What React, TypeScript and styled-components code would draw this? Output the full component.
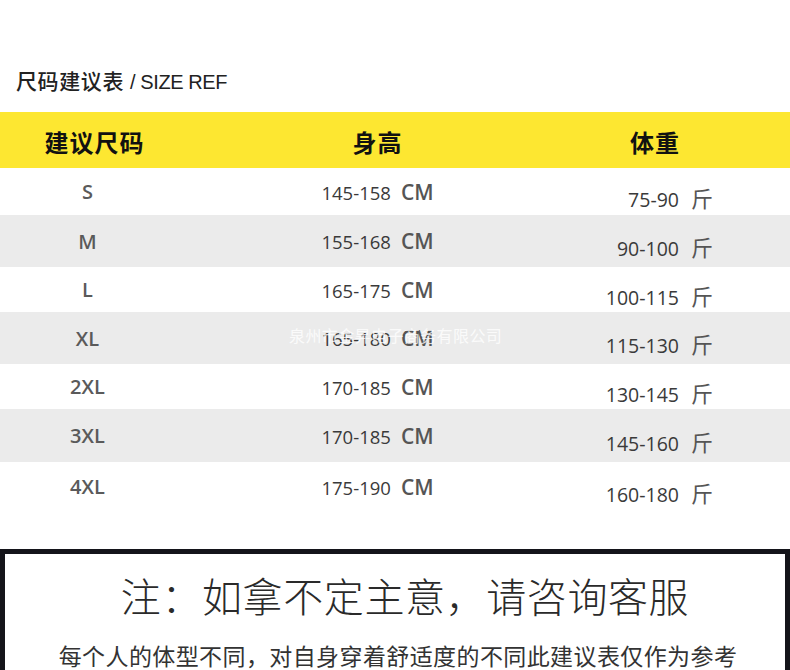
import React from "react";
import styled, { createGlobalStyle } from "styled-components";

const Global = createGlobalStyle`
  html, body { margin: 0; padding: 0; background: #fff; }
  body { width: 790px; overflow: hidden; font-family: "Noto Sans", "Noto Sans CJK SC", sans-serif; }
`;

const Page = styled.div`
  position: relative;
  width: 790px;
  height: 670px;
  overflow: hidden;
  display: flex;
  flex-direction: column;
`;

const Title = styled.div`
  height: 113px;
  padding: 65px 0 0 16px;
  box-sizing: border-box;
  display: flex;
  align-items: baseline;
  color: #222;
`;

const TitleCn = styled.span`
  font-family: "Noto Sans CJK SC", sans-serif;
  font-size: 21px;
  font-weight: 500;
  letter-spacing: 0.6px;
  line-height: 30px;
`;

const TitleEn = styled.span`
  font-family: "Liberation Sans", "Noto Sans", sans-serif;
  font-size: 20px;
  margin-left: 6px;
  letter-spacing: -0.4px;
`;

const Table = styled.div`
  display: flex;
  flex-direction: column;
`;

const Row = styled.div<{ $bg: string; $h: number }>`
  display: grid;
  grid-template-columns: 175px 405px 1fr;
  height: ${(p) => p.$h}px;
  background: ${(p) => p.$bg};
  align-items: center;
`;

const HeadCell = styled.div<{ $pr?: number; $pl?: number }>`
  text-align: center;
  font-family: "Noto Sans CJK SC", sans-serif;
  font-weight: 700;
  font-size: 24px;
  letter-spacing: 1px;
  color: #111;
  padding-right: ${(p) => p.$pr ?? 0}px;
  padding-left: ${(p) => p.$pl ?? 0}px;
  padding-top: 2px;
`;

const SizeCell = styled.div`
  text-align: center;
  font-family: "Open Sans", "Noto Sans", sans-serif;
  font-size: 20px;
  font-weight: 600;
  color: #5a5a5a;
`;

const HeightCell = styled.div`
  display: flex;
  justify-content: center;
  align-items: baseline;
  gap: 10px;
`;

const Num = styled.span<{ $size: number }>`
  font-family: "Open Sans", "Noto Sans", sans-serif;
  font-size: ${(p) => p.$size}px;
  color: #3a3a3a;
`;

const Unit = styled.span`
  font-family: "Open Sans", "Noto Sans", sans-serif;
  font-size: 21px;
  font-weight: 600;
  color: #555;
`;

const WeightCell = styled.div`
  display: flex;
  justify-content: flex-end;
  align-items: baseline;
  gap: 12px;
  padding-right: 77px;
  padding-top: 10px;
`;

const Jin = styled.span`
  font-family: "Noto Sans CJK SC", sans-serif;
  font-size: 22px;
  color: #555;
`;

const Watermark = styled.div`
  position: absolute;
  left: 289px;
  top: 323px;
  font-family: "Noto Sans CJK SC", sans-serif;
  font-size: 16px;
  color: rgba(255, 255, 255, 0.8);
  letter-spacing: 0.4px;
  pointer-events: none;
`;

const NoteBox = styled.div`
  margin-top: 38px;
  border: 5px solid #14141a;
  border-bottom: none;
  flex: 1;
  display: flex;
  flex-direction: column;
  align-items: center;
`;

const NoteTitle = styled.div`
  font-family: "Noto Sans CJK SC", sans-serif;
  font-weight: 300;
  font-size: 40px;
  line-height: 50px;
  color: #2a2a2a;
  margin-top: 16px;
  margin-left: 20px;
  letter-spacing: 0.6px;
`;

const NoteText = styled.div`
  font-family: "Noto Sans CJK SC", sans-serif;
  font-weight: 400;
  font-size: 23px;
  line-height: 30px;
  color: #333;
  margin-top: 20px;
  margin-left: 6px;
  letter-spacing: 0.4px;
`;

const rows = [
  ["S", "145-158", "75-90"],
  ["M", "155-168", "90-100"],
  ["L", "165-175", "100-115"],
  ["XL", "165-180", "115-130"],
  ["2XL", "170-185", "130-145"],
  ["3XL", "170-185", "145-160"],
  ["4XL", "175-190", "160-180"],
];

const heights = [47, 52, 45, 52, 45, 53, 49];

export default function App() {
  return (
    <Page>
      <Global />
      <Title>
        <TitleCn>尺码建议表</TitleCn>
        <TitleEn>/ SIZE REF</TitleEn>
      </Title>
      <Table>
        <Row $bg="#fde731" $h={56}>
          <HeadCell $pl={14}>建议尺码</HeadCell>
          <HeadCell>身高</HeadCell>
          <HeadCell $pr={60}>体重</HeadCell>
        </Row>
        {rows.map((r, i) => (
          <Row key={r[0]} $bg={i % 2 === 1 ? "#ebebeb" : "#ffffff"} $h={heights[i]}>
            <SizeCell>{r[0]}</SizeCell>
            <HeightCell>
              <Num $size={18.5}>{r[1]}</Num>
              <Unit>CM</Unit>
            </HeightCell>
            <WeightCell>
              <Num $size={19.5}>{r[2]}</Num>
              <Jin>斤</Jin>
            </WeightCell>
          </Row>
        ))}
      </Table>
      <Watermark>泉州市金昇电子商务有限公司</Watermark>
      <NoteBox>
        <NoteTitle>注：如拿不定主意，请咨询客服</NoteTitle>
        <NoteText>每个人的体型不同，对自身穿着舒适度的不同此建议表仅作为参考</NoteText>
      </NoteBox>
    </Page>
  );
}
